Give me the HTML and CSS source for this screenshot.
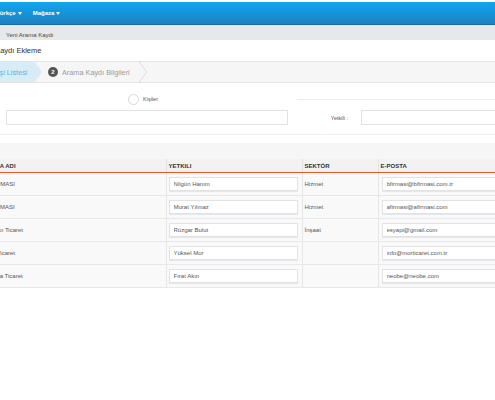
FILE: index.html
```html
<!DOCTYPE html>
<html lang="tr">

<head>
        <meta charset="UTF-8">
        <meta name="viewport" content="width=device-width, initial-scale=1.0">
        <title>Arama Kaydı Ekleme</title>
        <link rel="stylesheet" href="styles.css">
</head>

<body>
        <div class="page">
                <header class="topbar">
                        <nav class="menu">
                                <a href="#">Türkçe <span class="caret"></span></a>
                                <a href="#">Mağaza <span class="caret"></span></a>
                        </nav>
                </header>

                <div class="crumbs">Yeni Arama Kaydı</div>

                <h1 class="title">Arama Kaydı Ekleme</h1>

                <!-- adimlar -->
                <div class="steps">
                        <div class="step active">Kişi Listesi</div>
                        <div class="step">
                                <span class="num">2</span>
                                <span>Arama Kaydı Bilgileri</span>
                                <svg class="chevron" width="8" height="20" viewBox="0 0 8 20">
                                        <polyline points="0.5,0 7.5,10 0.5,20" fill="none" stroke="#dcdcdc" stroke-width="1" />
                                </svg>
                        </div>
                </div>

                <form class="filter">
                        <div class="choice-row">
                                <label class="choice"><span class="radio"></span>Kişiler</label>
                                <div class="rule"></div>
                        </div>
                        <div class="field-row">
                                <input class="wide" type="text">
                                <label class="field-label">Yetkili :</label>
                                <input class="side" type="text">
                        </div>
                </form>

                <div class="band"></div>

                <table class="list">
                        <colgroup>
                                <col class="c-name">
                                <col class="c-person">
                                <col class="c-sector">
                                <col class="c-mail">
                        </colgroup>
                        <thead>
                                <tr>
                                        <th>Firma Adı</th>
                                        <th>Yetkılı</th>
                                        <th>Sektör</th>
                                        <th>E-Posta</th>
                                </tr>
                        </thead>
                        <tbody>
                                <tr>
                                        <td>B FİRMASI</td>
                                        <td><input type="text" value="Nilgün Hanım"></td>
                                        <td>Hizmet</td>
                                        <td><input type="text" value="bfirmasi@bfirmasi.com.tr"></td>
                                </tr>
                                <tr>
                                        <td>A FİRMASI</td>
                                        <td><input type="text" value="Murat Yılmaz"></td>
                                        <td>Hizmet</td>
                                        <td><input type="text" value="afirmasi@afirmasi.com"></td>
                                </tr>
                                <tr>
                                        <td>Esyapı Ticaret</td>
                                        <td><input type="text" value="Rüzgar Bulut"></td>
                                        <td>İnşaat</td>
                                        <td><input type="text" value="esyapi@gmail.com"></td>
                                </tr>
                                <tr>
                                        <td>Mor Ticaret</td>
                                        <td><input type="text" value="Yüksel Mor"></td>
                                        <td></td>
                                        <td><input type="text" value="info@morticaret.com.tr"></td>
                                </tr>
                                <tr>
                                        <td>Medya Ticaret</td>
                                        <td><input type="text" value="Fırat Akın"></td>
                                        <td></td>
                                        <td><input type="text" value="neobe@neobe.com"></td>
                                </tr>
                        </tbody>
                </table>
        </div>
</body>

</html>
```

FILE: styles.css
```css
body {
        font-family: "Liberation Sans", Arial, sans-serif;
        background-color: #fff;
        margin: 0;
        padding: 0;
        overflow: hidden;
}

.page {
        width: 600px;
        margin-left: -40px;
        padding-top: 2px;
}

/* ust menu */
.topbar {
        height: 22px;
        background: linear-gradient(#10a6ee, #1e80c4);
        border-bottom: 1px solid #1b6aa6;
        display: flex;
        align-items: center;
}

.menu {
        display: flex;
        gap: 11px;
        padding-left: 36px;
}

.menu a {
        color: #fff;
        font-size: 6px;
        font-weight: bold;
        text-decoration: none;
        display: flex;
        align-items: center;
        gap: 2px;
}

.caret {
        display: inline-block;
        width: 0;
        height: 0;
        border-top: 3px solid #fff;
        border-left: 2.5px solid transparent;
        border-right: 2.5px solid transparent;
}

.crumbs {
        height: 15px;
        box-sizing: border-box;
        padding: 7px 0 0 46px;
        background-color: #e6e9ec;
        color: #444;
        font-size: 6px;
}

.title {
        height: 22px;
        box-sizing: border-box;
        margin: 0;
        padding-left: 11px;
        display: flex;
        align-items: center;
        font-size: 7.5px;
        font-weight: normal;
        color: #333;
        border-bottom: 1px solid #e4e4e4;
}

/* adimlar */
.steps {
        height: 21px;
        box-sizing: border-box;
        display: flex;
        align-items: center;
        background-color: #f6f6f6;
        border-bottom: 1px solid #e4e4e4;
        font-size: 7.3px;
        color: #9a9a9a;
}

.step {
        display: flex;
        align-items: center;
        gap: 4px;
        height: 100%;
}

.step.active {
        width: 82px;
        box-sizing: border-box;
        padding-left: 33px;
        background-color: #d8ecf8;
        color: #5eb2e0;
        clip-path: polygon(0 0, 75px 0, 82px 50%, 75px 100%, 0 100%);
}

.step .num {
        width: 10px;
        height: 10px;
        margin-left: 6px;
        border-radius: 50%;
        background-color: #555;
        color: #fff;
        font-size: 6px;
        font-weight: bold;
        display: flex;
        align-items: center;
        justify-content: center;
}

.chevron {
        margin-left: 5px;
}

/* filtre formu */
.filter {
        padding: 10px 0 9px;
        border-bottom: 1px solid #eee;
}

.choice-row {
        display: flex;
        align-items: center;
        height: 12px;
}

.choice {
        width: 337px;
        box-sizing: border-box;
        padding-left: 168px;
        display: flex;
        align-items: center;
        gap: 4px;
        font-size: 5.5px;
        color: #555;
}

.radio {
        width: 9px;
        height: 9px;
        border: 1px solid #d8d8d8;
        border-radius: 50%;
        background-color: #fff;
}

.rule {
        flex: 1;
        height: 1px;
        background-color: #ededed;
}

.field-row {
        display: flex;
        align-items: center;
        margin-top: 5px;
}

input {
        height: 15px;
        box-sizing: border-box;
        border: 1px solid #e2e2e2;
        background-color: #fff;
        padding: 0 4px;
        font-family: inherit;
        font-size: 6px;
        color: #555;
        outline: none;
}

.filter .wide {
        margin-left: 46px;
        width: 284px;
}

.field-label {
        width: 60px;
        text-align: right;
        font-size: 5.5px;
        color: #555;
}

.filter .side {
        margin-left: 13px;
        width: 200px;
}

.band {
        margin-top: 8px;
        height: 16px;
        background-color: #f6f6f6;
}

/* liste */
.list {
        width: 598px;
        table-layout: fixed;
        border-collapse: collapse;
        font-size: 6px;
        color: #555;
}

.c-name {
        width: 206px;
}

.c-person {
        width: 136px;
}

.c-sector {
        width: 76px;
}

.c-mail {
        width: 180px;
}

.list th {
        height: 13px;
        padding: 0 2px;
        text-align: left;
        text-transform: uppercase;
        font-weight: bold;
        color: #333;
        background-color: #f2f2f2;
        border-left: 1px solid #e2e2e2;
        border-bottom: 1px solid #f0582a;
}

.list td {
        height: 14px;
        padding: 4px 4px 4px 2px;
        background-color: #f9f9f9;
        border-left: 1px solid #e6e6e6;
        border-bottom: 1px solid #e8e8e8;
        vertical-align: middle;
}

.list th:first-child,
.list td:first-child {
        padding-left: 25px;
        border-left: none;
}

.list td:last-child {
        padding-left: 3px;
}

.list td input {
        width: 100%;
        height: 14px;
        box-shadow: 0 1px 0 #e3e8ee;
}
```
